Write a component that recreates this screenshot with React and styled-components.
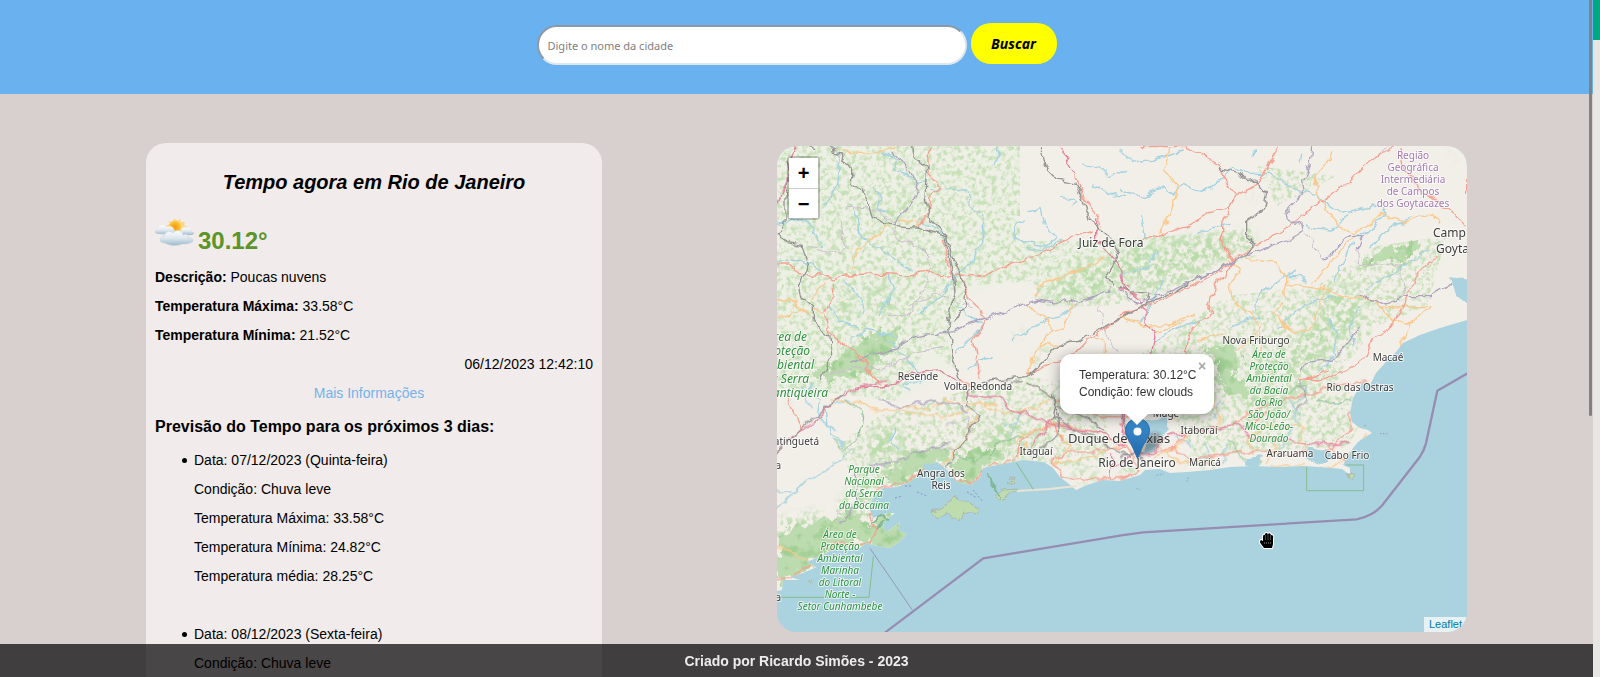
import React from "react";
import styled, { createGlobalStyle, css } from "styled-components";

const GlobalStyle = createGlobalStyle`
  * { box-sizing: border-box; }
  body {
    margin: 0;
    background: #d8cfcf;
    color: #000;
    font: 14px/29px "Liberation Sans", Arial, sans-serif;
  }
`;

/* ---------- page frame ---------- */

const Frame = styled.div`
  display: grid;
  grid-template-columns: minmax(0, 1fr) 7px;
  height: 100vh;
  overflow: hidden;
`;

const Page = styled.div`
  position: relative;
  height: 100vh;
  overflow: hidden;
`;

const Scroller = styled.div`
  height: 100%;
  overflow-y: auto;
  scrollbar-width: none;
`;

const ScrollThumb = styled.div`
  position: absolute;
  top: 0;
  right: 1px;
  width: 3px;
  height: 416px;
  border-radius: 0 0 2px 2px;
  background: #808182;
`;

const EdgeStrip = styled.div`
  background: #e7e6e3;
  border-top: 40px solid #00a884;
`;

const Header = styled.header`
  height: 94px;
  padding-top: 23px;
  background: #69b1ef;
`;

const SearchForm = styled.form`
  display: flex;
  justify-content: center;
  align-items: flex-end;
  gap: 4px;
`;

const SearchInput = styled.input`
  width: 430px;
  height: 40px;
  padding: 0 9px;
  border: 2px solid;
  border-color: #8d9aa5 #dfe6ec #dfe6ec #8d9aa5;
  border-radius: 20px;
  background: #fff;
  font: 11px "Noto Sans", sans-serif;
  &::placeholder { color: #808080; opacity: 1; }
`;

const SearchButton = styled.button`
  width: 86px;
  height: 41px;
  margin-bottom: 1px;
  padding: 0;
  border: 0;
  border-radius: 20px;
  background: #ff0;
  color: #000;
  font: italic bold 14px "Noto Sans", sans-serif;
`;

const Content = styled.main`
  display: grid;
  grid-template-columns: minmax(0, 456fr) minmax(0, 690fr);
  column-gap: 175px;
  align-items: start;
  padding: 49px 126px 52px 146px;
`;

const Footer = styled.footer`
  position: absolute;
  inset: auto 0 0 0;
  height: 33px;
  background: rgba(0, 0, 0, 0.7);
  color: #ececec;
  font-size: 14px;
  font-weight: bold;
  line-height: 35px;
  text-align: center;
`;

/* ---------- weather card ---------- */

const Card = styled.section`
  min-height: 900px;
  padding: 27px 9px;
  border-radius: 20px;
  background: #f1ebeb;
`;

const Title = styled.h1`
  margin: 0;
  font-size: 20px;
  font-style: italic;
  line-height: 24px;
  text-align: center;
`;

const Current = styled.div`
  display: flex;
  align-items: flex-end;
  gap: 3px;
  height: 49px;
  margin-top: 20px;
  padding-bottom: 8px;
`;

const Degrees = styled.strong`
  color: #5b9428;
  font-size: 24px;
  line-height: 28px;
`;

const Line = styled.p`
  margin: 0;
  text-align: ${(p) => p.$align || "left"};
`;

const MoreLink = styled.a`
  display: block;
  padding-right: 10px;
  color: #74b3ec;
  text-align: center;
  text-decoration: none;
`;

const Subtitle = styled.h2`
  margin: 0;
  font-size: 16px;
  line-height: 38px;
`;

const Days = styled.ul`
  margin: 0;
  padding-left: 39px;
  list-style: none;
`;

const Day = styled.li`
  position: relative;
  margin-bottom: 29px;
  &::before {
    content: "";
    position: absolute;
    top: 12px;
    left: -12px;
    width: 5px;
    height: 5px;
    border-radius: 50%;
    background: #000;
  }
`;

const days = [
  ["Data: 07/12/2023 (Quinta-feira)", "Condição: Chuva leve", "Temperatura Máxima: 33.58°C", "Temperatura Mínima: 24.82°C", "Temperatura média: 28.25°C"],
  ["Data: 08/12/2023 (Sexta-feira)", "Condição: Chuva leve"],
];

function FewClouds() {
  return (
    <svg width="40" height="36" viewBox="0 0 40 36" aria-hidden="true">
      <defs>
        <radialGradient id="sun">
          <stop offset="0" stopColor="#f39a16" />
          <stop offset="0.6" stopColor="#fbb62b" />
          <stop offset="1" stopColor="#fdd35c" />
        </radialGradient>
        <linearGradient id="cloud" x1="0" y1="0" x2="0" y2="1">
          <stop offset="0" stopColor="#fbfcfd" />
          <stop offset="0.5" stopColor="#dfe8ee" />
          <stop offset="1" stopColor="#9bbacd" />
        </linearGradient>
      </defs>
      <path d="M11 7l4-2-2-3 5 1 1-4 3 3 3-2 1 3 4 0-1 3 3 2-3 2 1 4H14z" fill="#fbd371" opacity=".8" />
      <circle cx="20" cy="8" r="6.500" fill="url(#sun)" />
      <path d="M4 15c-6 0-5-5-1-5 0-4 6-5 8-2 4-2 8 0 8 3 3 2 1 5-2 5z" fill="url(#cloud)" />
      <path d="M26 14c-1-4 2-7 6-5 3-1 5 2 4 3 4 0 4 4 0 4H24z" fill="url(#cloud)" />
      <path d="M10 24c-7 0-6-7-1-6 0-5 6-7 9-4 3-4 10-3 10 2 4-2 6 1 5 3 6-1 7 4 2 5-3 1-5 1-8 1-4 2-13 2-17-1z" fill="url(#cloud)" stroke="#bccfdb" strokeWidth=".4" />
    </svg>
  );
}

/* ---------- map ---------- */

const MapBox = styled.section`
  position: relative;
  height: 486px;
  margin-top: 3px;
  border-radius: 20px;
  overflow: hidden;
  background: #aad3df;
`;

const MapSvg = styled.svg`
  display: block;
  width: 100%;
  height: 100%;
`;

const strokes = {
  river: css`stroke: #a5d2e0; stroke-width: 4px;`,
  trunk: css`stroke: #f6a08f; stroke-width: 4px;`,
  road: css`stroke: #fac98c; stroke-width: 4px;`,
  motorway: css`stroke: #e3809f; stroke-width: 4px;`,
  rail: css`stroke: #949292; stroke-width: 4px;`,
  border: css`stroke: #ada2be; stroke-width: 4px;`,
  thin: css`stroke: #c9bfcb; stroke-width: 3px;`,
  park: css`stroke: #86bd8e; stroke-width: 3px;`,
};

const MapPath = styled.path`
  fill: none;
  stroke-linejoin: round;
  stroke-linecap: round;
  ${(p) => strokes[p.$kind]}
`;

const MapText = styled.text`
  font-family: "Noto Sans", sans-serif;
  font-size: ${(p) => ({ large: 12, city: 13 }[p.$size] || 10)}px;
  font-style: ${(p) => (p.$tone === "park" ? "italic" : "normal")};
  fill: ${(p) => ({ park: "#2f9140", region: "#a27bb0" }[p.$tone] || "#3b3b3b")};
  stroke: rgba(255, 255, 255, 0.7);
  stroke-width: 2px;
  stroke-linejoin: round;
  paint-order: stroke;
  text-anchor: ${(p) => p.$anchor || "middle"};
`;

// The map is traced in four sheets, each drawn at three units per pixel.
const sheets = {
  nw: "translate(-7 -6) scale(0.33333)",
  ne: "translate(343 -6) scale(0.33333)",
  sw: "translate(-7 234) scale(0.33333)",
  se: "translate(343 234) scale(0.33333)",
};

const sketchy = {
  nw: [
    ["river", "M340 40L380 60L370 90L410 100L440 130L470 125M190 20L210 60L200 130L170 190M310 140L330 180L320 210L350 215M20 250L90 240L120 250L125 280L160 320M240 200L265 230L270 290L310 320L350 340L380 370L430 390M480 150L510 145L590 150L600 190L635 230L640 290L610 360L570 395L540 430L510 470L450 520M450 240L500 270L520 290M680 20L690 45L670 70M940 65L960 85L990 80L1020 110L1070 85M780 215L810 205L825 260L860 290L830 320L740 300L735 260L760 240M880 170L920 185L900 200M970 130L1010 160L1070 170M220 420L270 470L280 520M350 400L370 450L330 530M560 500L600 530L640 560L560 640M730 600L780 570L830 540L870 530L920 490M20 370L70 360L120 370L160 400M450 730L440 690L400 640L350 600M600 690L640 660L670 650M240 600L290 570L380 590M760 320L820 330L880 300M180 500L210 540L260 560"],
    ["thin", "M220 210L280 205L330 215L370 250L370 290L440 320L470 350L480 400L450 470L420 520L350 530M980 480L1000 570L1050 640M120 320L200 345L225 320L210 240M420 500L500 460L600 500"],
    ["road", "M190 30L240 35L330 40L370 20M390 240L430 245L440 260M350 260L310 300L260 325L245 390M20 480L80 480L85 510L120 520M20 530L60 525L90 510M130 475L165 420M770 490L800 520L830 540L840 570L790 650L775 700M800 470L810 440L870 410L950 380L1000 350M910 490L880 560L840 570M860 620L830 610L810 620M980 590L1000 600L1000 640M160 520L130 510"],
    ["trunk", "M480 20L470 50L475 100L510 145L480 170L475 220L445 260M520 295L530 350L545 400M20 375L60 375L100 405L160 405L190 420L230 405L330 400L420 405L460 395L520 410L570 405L640 410L720 370L790 350L860 320L900 290L970 270M575 410L600 480L635 510L640 560L610 600L620 650L630 710M190 430L185 480L165 510L180 580L230 620L280 650L290 690L330 730M915 110L940 170L980 220L990 260M1080 515L1000 570L940 610L900 650L770 700M290 680L260 640"],
    ["motorway", "M80 20L60 60L50 130L20 190M865 20L890 50L900 80L915 105M980 240L980 300L1010 330L1045 370L1060 430L1080 445M260 745L360 735L430 700L510 695L560 720"],
    ["rail", "M120 20L140 25M185 20L190 40L215 45L245 90L245 135L280 150L310 230L380 260L450 265L525 290L535 340L550 400L555 460L530 530L540 570L545 640L570 720M425 20L430 50L470 80L465 170L480 240L530 290L545 350L570 400L590 460L585 500L550 540M50 60L60 100L45 160L45 250L25 280L45 310L100 320L115 370L85 440L95 480L130 500L130 550L180 590L185 640L150 720M810 20L825 80L860 115L915 130L940 180L960 240L990 270L1030 310L1045 350L1010 410L1030 440M1080 520L990 570L930 600L860 620L770 710L640 725"],
    ["border", "M360 40L400 65L430 110L445 150L420 200L380 240L370 250M370 630L440 590L500 580L560 575L600 550L660 530L740 500L800 480L870 490L900 475L930 490L1020 450M240 670L310 640L370 630"],
    ["thin", "M170 710L250 680L330 690L450 630L520 620"],
  ],
  ne: [
    ["river", "M0 30L40 70L100 60L190 30M0 150L60 170L130 140L160 160L190 130L250 160L310 110L340 80L380 100L450 100L520 150L590 160L630 200L680 220L760 195L800 210L740 280L700 290M560 260L630 270L680 230M410 510L415 460L480 420L530 390M700 310L670 370L640 420M740 450L800 410L860 370L930 330M480 560L530 510L580 480L640 470M750 330L790 280L870 230M100 600L180 560L240 540M65 230L75 290L60 310M540 70L545 40M400 30L400 45M230 280L330 250M0 410L90 380L110 330M560 430L540 410L500 410M630 540L650 580L640 650L600 690M720 500L690 560L700 620M330 560L420 530M130 420L90 500L60 550"],
    ["thin", "M555 275L605 355M710 320L720 370L850 375M760 60L800 20M840 380L850 460L820 490"],
    ["road", "M150 20L130 90L175 135L155 210L120 280M635 30L630 60L585 110L590 160L620 210L670 265L700 285L760 245L780 220L850 245L930 220L960 250M700 290L640 360L580 430M330 360L360 400L330 430L335 470L400 530L420 570L360 630M380 355L470 370L500 410L500 430L580 440L620 450L680 470L770 480L780 505L840 500L930 500L900 530L870 550L850 600L830 650M500 430L490 480L460 520L520 580L580 560L600 480L620 440M0 530L80 560L160 550L220 520M100 580L150 560L200 540M780 500L820 540L880 550M240 600L300 580L330 600M490 540L520 580M420 560L420 640"],
    ["trunk", "M60 20L200 20L240 40L300 85L345 165L330 200L305 250L305 310L340 360M475 25L430 100L400 140L345 170L330 200L260 220L210 255L130 285L60 300M820 20L730 75L670 140L600 185L530 240L440 300L400 320L340 360L330 390L290 430L265 490L275 520L220 560L200 600L200 640M950 350L900 390L870 440L855 480L820 560L760 600L740 650L680 690L600 720L530 715M840 30L850 80L900 150L960 190L1000 220L1035 260M1040 90L1040 160M0 525L50 510L130 480L330 375M560 720L620 690"],
    ["motorway", "M0 410L20 450L60 480L75 510L75 550L105 580L95 640M0 445L50 465"],
    ["rail", "M295 85L360 100L380 125L410 120L440 160L430 210L380 245L380 290L405 310L370 350L330 370L230 415L160 460L80 490L50 510L0 535M0 440L30 455L90 460L80 500"],
    ["border", "M575 20L570 80L545 120L550 160L500 210L505 240L545 250L550 275L500 300L370 350L310 380L220 420M605 355L630 350L650 320L680 290L730 290L710 320M0 450L50 490L140 460L220 420M720 470L760 480L800 495L850 470L930 470L980 435L1041 430M540 690L560 670L640 660L720 560"],
  ],
  sw: [
    ["river", "M20 390L60 350L110 300L180 260L250 210M370 140L370 190L380 210M90 20L150 60L140 110L200 150M700 140L740 130L750 100M240 60L170 80L180 160L220 200M460 0L400 10L420 30M740 130L720 170M20 330L60 340M130 10L100 60L130 80"],
    ["thin", "M530 140L590 110L600 160L560 210L480 200M210 430L200 400L250 370L300 370"],
    ["road", "M180 60L280 70L320 95L400 80L470 85L530 60L560 75L620 70L680 70M400 95L520 110L600 90M620 110L590 170L550 220L520 250M640 75L700 95L760 95L840 60M20 500L60 505L80 530L110 540M740 190L760 160L800 150L860 130M840 120L900 200L860 240M850 250L930 240L1000 215L1050 200M1000 200L1020 170L1075 190M740 230L770 190"],
    ["trunk", "M50 50L70 90L95 140M600 20L570 0M845 240L900 215L1000 210L1070 205M860 220L850 250L880 290L940 300L1030 295L1080 290M300 500L320 450L300 400L320 330L420 300L500 245L560 300L610 310L640 270L730 235L760 170L860 130M850 130L920 140L1000 160M20 600L90 580L140 540L200 490L300 490M850 130L880 180M860 60L1000 110L1080 110"],
    ["motorway", "M20 215L70 165L130 130L210 50L280 20L350 0M590 35L640 55L690 50L730 95L770 100L850 135L920 145L1000 160L1060 200M850 110L820 160L790 190L780 220M1060 90L1060 190M1020 290L1025 230M1030 260L1080 230"],
    ["rail", "M20 215L100 140L190 70L220 40M640 20L600 30L590 80L630 110L580 180L550 230L530 260M780 10L830 40L860 60L850 110L910 145L980 170L1010 200L1080 230M860 100L870 160L820 200L790 240M860 80L940 110L1000 150M850 40L860 90M700 10L760 5"],
    ["border", "M330 60L400 80L480 60L560 75L590 100M300 260L360 250L430 220L540 190M210 430L260 370L260 280"],
    ["park", "M230 60L280 100L270 170L220 210L190 180M560 230L620 240L650 210M760 170L680 190L660 240"],
  ],
  se: [
    ["river", "M250 190L270 230L240 240M520 150L480 200M560 30L520 80L530 130M170 170L220 200M300 60L280 110M540 110L510 60M320 190L310 250"],
    ["road", "M180 150L200 170L170 200L100 235M120 200L180 250L270 250M400 220L380 180L430 140L550 140L540 190L560 200M560 270L640 260L700 220L740 160M280 60L300 130L280 160M170 120L140 80M450 260L560 255M470 190L440 250"],
    ["trunk", "M0 300L60 270L40 230L0 180M110 220L160 200L210 240L330 220L410 210L500 225L610 215L640 200L690 150L690 90M0 130L40 200M150 210L200 160M380 150L440 95M340 130L370 110L400 90L520 50L680 10L740 0M620 200L680 250"],
    ["motorway", "M100 180L180 160L290 145L360 130L390 180L440 170L510 185L620 195L690 190M0 100L10 150L40 200M30 220L70 222L110 220L115 190"],
    ["rail", "M0 90L30 180L60 220M0 230L50 220L70 240"],
    ["border", "M540 0L560 60L530 90"],
    ["park", "M510 40L520 20L560 20L550 50M590 60L650 70L690 60M330 180L370 240L420 250"],
  ],
};

// "dense" woods are solid, "open" woods are broken up into patches
const forests = {
  nw: {
    dense: "M290 590L390 570L380 620L320 660L300 700L240 700L150 720L130 700L220 640Z",
    open: "M310 200L430 180L400 230L330 245ZM200 470L230 440L250 520L210 540ZM290 460L340 430L380 480L370 520L310 510ZM940 360L1080 370L1030 440L960 480L800 480L860 420ZM820 620L850 640L780 690ZM730 580L760 560L740 600ZM400 180L420 140L440 160Z",
  },
  ne: {
    dense: "M730 375L790 335L860 310L900 305L890 340L840 370L790 355L740 380ZM240 630L320 610L370 650L330 730L290 720L290 650Z",
    open: "M0 320L300 280L400 270L400 310L320 350L180 430L60 450L0 400ZM980 35L1010 40L1000 55ZM380 650L520 610L600 520L720 480L730 540L620 640L560 700L540 740L380 720ZM730 390L750 380L745 405ZM590 450L720 430L710 500L600 520ZM160 560L210 560L190 600ZM380 170L410 160L400 180Z",
  },
  sw: {
    dense: "M300 400L270 420L300 440L290 490L200 500L140 540L100 575L60 590L30 620L20 620L20 470L70 440L150 420L220 400ZM290 450L340 400L430 430L430 470L370 510L300 500ZM400 220L520 200L540 250L500 235L450 290L380 310L350 300ZM540 250L600 210L680 200L700 220L650 260L620 300L580 310Z",
    open: "M20 -10L80 10L70 60L20 40ZM290 240L280 190L320 150L390 150L400 200L350 240ZM240 330L300 260L420 220L380 310L310 340L300 400L220 420L200 380ZM640 200L650 160L700 110L770 120L740 180L760 230L680 250ZM900 270L970 270L990 290L930 310ZM750 200L790 150L830 170L780 220ZM20 420L150 390L150 440L20 480Z",
  },
  se: {
    dense: "M290 -10L380 0L390 60L350 50L300 10Z",
    open: "M400 -20L540 -10L540 40L460 100L390 120L360 70ZM610 -10L640 -10L635 5ZM0 260L40 255L50 280L0 300ZM200 240L260 220L300 260L230 265ZM640 120L670 115L660 150L630 150Z",
  },
};

const labels = [
  { x: 334, y: 101, size: "large", lines: ["Juiz de Fora"] },
  { x: 141, y: 234, lines: ["Resende"] },
  { x: 201, y: 244, lines: ["Volta Redonda"] },
  { x: 479, y: 198, lines: ["Nova Friburgo"] },
  { x: 611, y: 215, lines: ["Macaé"] },
  { x: 583, y: 245, lines: ["Rio das Ostras"] },
  { x: 636, y: 13, tone: "region", lines: ["Região", "Geográfica", "Intermediária", "de Campos", "dos Goytacazes"] },
  { x: 656, y: 91, size: "large", anchor: "start", lines: ["Camp"] },
  { x: 659, y: 107, size: "large", anchor: "start", lines: ["Goyta"] },
  { x: 30, y: 195, size: "large", anchor: "end", tone: "park", lines: ["Área de"] },
  { x: 33, y: 209, size: "large", anchor: "end", tone: "park", lines: ["Proteção"] },
  { x: 37, y: 223, size: "large", anchor: "end", tone: "park", lines: ["Ambiental"] },
  { x: 32, y: 237, size: "large", anchor: "end", tone: "park", lines: ["da Serra"] },
  { x: 51, y: 251, size: "large", anchor: "end", tone: "park", lines: ["Mantiqueira"] },
  { x: 42, y: 299, anchor: "end", lines: ["Guaratinguetá"] },
  { x: 4, y: 323, anchor: "end", lines: ["a"] },
  { x: 4, y: 455, anchor: "end", lines: ["a"] },
  { x: 87, y: 327, tone: "park", lines: ["Parque", "Nacional", "da Serra", "da Bocaina"] },
  { x: 63, y: 392, tone: "park", lines: ["Área de", "Proteção", "Ambiental", "Marinha", "do Litoral", "Norte -", "Setor Cunhambebe"] },
  { x: 164, y: 331, lines: ["Angra dos", "Reis"] },
  { x: 259, y: 309, lines: ["Itaguaí"] },
  { x: 342, y: 297, size: "city", lines: ["Duque de Caxias"] },
  { x: 360, y: 321, size: "large", lines: ["Rio de Janeiro"] },
  { x: 389, y: 271, lines: ["Magé"] },
  { x: 422, y: 288, lines: ["Itaboraí"] },
  { x: 428, y: 320, lines: ["Maricá"] },
  { x: 513, y: 311, lines: ["Araruama"] },
  { x: 570, y: 313, lines: ["Cabo Frio"] },
  { x: 492, y: 212, tone: "park", lines: ["Área de", "Proteção", "Ambiental", "da Bacia", "do Rio", "São João/", "Mico-Leão-", "Dourado"] },
];

function MapDrawing() {
  return (
    <MapSvg viewBox="0 0 690 486" preserveAspectRatio="xMidYMid slice" role="img" aria-label="Mapa">
      <defs>
        <filter id="wiggle" filterUnits="userSpaceOnUse" x="0" y="0" width="690" height="486">
          <feTurbulence type="fractalNoise" baseFrequency="0.09" numOctaves="2" seed="4" />
          <feDisplacementMap in="SourceGraphic" scale="9" xChannelSelector="R" yChannelSelector="G" />
        </filter>
        <filter id="speckle" filterUnits="userSpaceOnUse" x="0" y="0" width="690" height="486" colorInterpolationFilters="sRGB">
          <feTurbulence type="fractalNoise" baseFrequency="0.2" numOctaves="4" seed="9" />
          <feColorMatrix values="0 0 0 0 0.78  0 0 0 0 0.88  0 0 0 0 0.72  4 0 0 0 -1.8" result="dots" />
          <feComposite in="dots" in2="SourceGraphic" operator="in" />
        </filter>
        <filter id="openWood" filterUnits="userSpaceOnUse" x="0" y="0" width="690" height="486" colorInterpolationFilters="sRGB">
          <feGaussianBlur in="SourceGraphic" stdDeviation="5" result="area" />
          <feTurbulence type="fractalNoise" baseFrequency="0.14" numOctaves="4" seed="12" />
          <feColorMatrix values="0 0 0 0 0.73  0 0 0 0 0.86  0 0 0 0 0.67  6 0 0 0 -2.8" result="patches" />
          <feComposite in="patches" in2="area" operator="in" />
        </filter>
        <filter id="denseWood" filterUnits="userSpaceOnUse" x="0" y="0" width="690" height="486" colorInterpolationFilters="sRGB">
          <feTurbulence type="fractalNoise" baseFrequency="0.12" numOctaves="4" seed="2" />
          <feDisplacementMap in="SourceGraphic" scale="22" xChannelSelector="R" yChannelSelector="G" result="rough" />
          <feTurbulence type="fractalNoise" baseFrequency="0.08" numOctaves="4" seed="12" />
          <feColorMatrix values="0 0 0 0 0.63  0 0 0 0 0.81  0 0 0 0 0.58  5 0 0 0 -2.6" result="dark" />
          <feComposite in="dark" in2="rough" operator="in" result="shade" />
          <feMerge>
            <feMergeNode in="rough" />
            <feMergeNode in="shade" />
          </feMerge>
        </filter>
        <clipPath id="land">
          <path d="M0 0H690V174L663 182L643 189L626 197L619 206L609 216L599 227L593 239L585 237L576 252L573 267L575 276L583 282L591 284L595 287L588 291L581 296L576 302L570 312L566 319L573 322L573 329L565 323L543 321L526 320L503 321L476 320L453 321L433 324L410 326L393 327L383 323L368 324L363 329L353 332L343 335L326 334L310 339L299 344L292 338L283 331L276 322L267 316L246 314L226 318L215 320L206 322L203 332L193 339L180 336L170 324L160 316L150 319L143 329L133 336L120 341L106 342L96 351L93 364L96 372L110 367L118 367L106 377L108 387L123 376L121 384L130 388L121 397L113 402L96 399L90 397L83 402L60 401L46 409L30 416L40 421L26 427L13 431L23 434L6 434L5 444L0 445Z" />
        </clipPath>
      </defs>

      <rect width="690" height="486" fill="#aad3df" />
      <g clipPath="url(#land)">
        <rect width="690" height="486" fill="#f2efe9" />
        <path d="M0 0H243V95L320 95L420 90L330 150L270 160L255 130L190 150L170 230L120 255L0 240Z" fill="#e9f1e0" opacity=".45" />
        <path filter="url(#speckle)" d="M0 0H243V95L300 95L420 88L475 82L480 110L430 125L380 150L330 160L265 160L255 135L190 140L170 190L180 225L150 200L120 255L0 240ZM400 185L450 150L540 140L600 100L670 90L650 160L600 180L560 230L590 270L570 300L420 310L390 260L330 230ZM100 270L240 230L330 240L330 320L200 330L80 340L60 300ZM480 20L560 30L500 60Z" />
        <g filter="url(#openWood)">
          {Object.keys(sheets).map((key) => (
            <path key={key} transform={sheets[key]} d={forests[key].open} />
          ))}
        </g>
        <g filter="url(#denseWood)">
          {Object.keys(sheets).map((key) => (
            <path key={key} transform={sheets[key]} d={forests[key].dense} fill="#bcdbae" />
          ))}
        </g>
        <g filter="url(#wiggle)">
          {Object.keys(sheets).map((key) => (
            <g key={key} transform={sheets[key]}>
              {sketchy[key].map(([kind, d]) => <MapPath key={d} $kind={kind} d={d} />)}
            </g>
          ))}
        </g>
      </g>

      {/* bays, lagoons and islands */}
      <g fill="#aad3df" filter="url(#wiggle)">
        <path d="M366 274L390 272L394 284L381 292L379 305L366 309L369 292Z" />
        <path d="M672 131L695 134V162L680 150Z" />
        <path d="M530 302L550 305L558 312L545 318L530 312ZM470 312L485 310L480 320H470Z" />
        <path d="M146 318L160 317L163 328L150 330Z" />
      </g>
      <g filter="url(#wiggle)" fill="#bfdcae" stroke="#a6a09a" strokeWidth=".6">
        <path d="M154 366L168 361L177 351L186 354L192 358L204 362L200 369L186 367L182 376L172 367L160 374Z" />
        <path d="M218 350L226 344L240 343L232 350L222 353ZM229 336L236 331L234 336Z" />
        <path d="M572 327L577 329L574 334L571 332Z" />
        <path d="M30 436L36 434L34 438Z" />
      </g>
      <path d="M240 345L272 343L300 340" fill="none" stroke="#e9e4d4" strokeWidth="2" />
      <path d="M96 376L104 370L112 372M100 384L108 374M212 326L214 340L224 350" fill="none" stroke="#7fb893" strokeWidth="2" filter="url(#wiggle)" />

      {/* protected sea areas and maritime limits */}
      <g transform={sheets.sw}>
        <MapPath $kind="park" d="M310 530L297 652H20M740 250L790 328" />
        <path d="M300 505L427 690" fill="none" stroke="#9c97b4" strokeWidth="3" />
        <path d="M345 758L640 535L1050 467" fill="none" stroke="#978db2" strokeWidth="7" />
      </g>
      <g transform={sheets.se}>
        <MapPath $kind="park" d="M560 262V332H731V255H680" />
        <path d="M-2 467L70 457L710 418C740 412 765 400 785 378L900 230Q912 212 918 190L952 32L1050 -24" fill="none" stroke="#978db2" strokeWidth="7" strokeLinejoin="round" />
        <path d="M50 325L60 330M110 285L130 282M200 305L206 292M735 135L736 142M780 160L805 162" stroke="#8f9bb5" strokeWidth="3" strokeDasharray="4 5" />
      </g>
      <path d="M128 340H136M140 346L150 350M190 346L200 352M196 344L206 356M118 352L126 350" stroke="#8c90c8" strokeDasharray="2 2" />

      {labels.map((l) => (
        <g key={l.lines.join() + l.y}>
          {l.lines.map((t, i) => (
            <MapText key={t} x={l.x} y={l.y + i * 12} $size={l.size} $tone={l.tone} $anchor={l.anchor}>
              {t}
            </MapText>
          ))}
        </g>
      ))}

      {/* grabbing-hand pointer */}
      <g transform="translate(482 387)">
        <path d="M5 15L2 11Q0 8 2 7L4 8V4Q4 1 6 2V1Q7-1 9 1Q11-1 12 2Q15 2 14 5V11L13 15Z" fill="#000" stroke="#fff" strokeWidth="2" strokeLinejoin="round" paintOrder="stroke" />
        <path d="M6.500 2V7M9 1V7M11.500 2V7" stroke="#777" strokeWidth=".6" />
        <path d="M5 10H13" stroke="#999" strokeDasharray="1 1" />
      </g>
    </MapSvg>
  );
}

const ZoomControls = styled.div`
  position: absolute;
  top: 10px;
  left: 10px;
  border: 2px solid rgba(0, 0, 0, 0.2);
  border-radius: 4px;
`;

const ZoomButton = styled.button`
  display: block;
  width: 29px;
  height: 30px;
  padding: 0;
  border: 0;
  background: #fff;
  color: #000;
  font: bold 20px/30px "Liberation Sans", Arial, sans-serif;
  & + & { border-top: 1px solid #ccc; }
`;

const MarkerPin = styled.svg`
  position: absolute;
  top: 272px;
  left: calc(50% + 3px);
`;

const Popup = styled.div`
  position: absolute;
  top: 208px;
  left: calc(50% - 62px);
  width: 154px;
  height: 60px;
  padding: 13px 19px;
  border-radius: 12px;
  background: #fff;
  box-shadow: 0 3px 14px rgba(0, 0, 0, 0.4);
  color: #333;
  font-size: 12px;
  line-height: 17px;
  white-space: nowrap;
  &::after {
    content: "";
    position: absolute;
    top: 100%;
    left: 50%;
    margin-left: -11px;
    border: 11px solid transparent;
    border-top-color: #fff;
    border-bottom-width: 0;
  }
`;

const CloseButton = styled.button`
  position: absolute;
  top: 0;
  right: 0;
  width: 24px;
  height: 24px;
  padding: 0;
  border: 0;
  background: transparent;
  color: #a5a5a5;
  font: bold 14px/24px "Liberation Sans", Arial, sans-serif;
`;

const Attribution = styled.div`
  position: absolute;
  right: 0;
  bottom: 0;
  padding: 0 5px;
  background: rgba(255, 255, 255, 0.7);
  font-size: 11px;
  line-height: 15px;
  a { color: #0078a8; text-decoration: none; }
`;

function Marker() {
  return (
    <MarkerPin width="42" height="42" viewBox="0 0 42 42" aria-hidden="true">
      <defs>
        <linearGradient id="pin" x1="0" y1="0" x2="0" y2="1">
          <stop offset="0" stopColor="#3b8fd0" />
          <stop offset="1" stopColor="#2468a8" />
        </linearGradient>
        <filter id="pinShadow"><feGaussianBlur stdDeviation="2" /></filter>
      </defs>
      <path d="M13 40L20 20Q30 10 36 18Q38 26 28 32Z" fill="#000" opacity=".3" filter="url(#pinShadow)" />
      <path d="M12.500 .5C5.800.5.500 5.800.500 12.500c0 6 4 10 7 16.500l5 11.500 5-11.500c3-6.500 7-10.500 7-16.500C24.500 5.800 19.200.5 12.500.5z" fill="url(#pin)" stroke="#2b6fae" />
      <circle cx="12.500" cy="13.500" r="4" fill="#fff" />
    </MarkerPin>
  );
}

export default function App() {
  return (
    <Frame>
      <GlobalStyle />
      <Page>
        <Scroller>
          <Header>
            <SearchForm onSubmit={(e) => e.preventDefault()}>
              <SearchInput type="text" placeholder="Digite o nome da cidade" aria-label="Digite o nome da cidade" />
              <SearchButton type="submit">Buscar</SearchButton>
            </SearchForm>
          </Header>
          <Content>
            <Card>
              <Title>Tempo agora em Rio de Janeiro</Title>
              <Current>
                <FewClouds />
                <Degrees>30.12°</Degrees>
              </Current>
              <Line><strong>Descrição:</strong> Poucas nuvens</Line>
              <Line><strong>Temperatura Máxima:</strong> 33.58°C</Line>
              <Line><strong>Temperatura Mínima:</strong> 21.52°C</Line>
              <Line $align="right">06/12/2023 12:42:10</Line>
              <MoreLink href="#previsao">Mais Informações</MoreLink>
              <Subtitle id="previsao">Previsão do Tempo para os próximos 3 dias:</Subtitle>
              <Days>
                {days.map((lines) => (
                  <Day key={lines[0]}>
                    {lines.map((text) => <Line key={text}>{text}</Line>)}
                  </Day>
                ))}
              </Days>
            </Card>
            <MapBox>
              <MapDrawing />
              <Marker />
              <ZoomControls>
                <ZoomButton type="button" aria-label="Aproximar">+</ZoomButton>
                <ZoomButton type="button" aria-label="Afastar">−</ZoomButton>
              </ZoomControls>
              <Popup>
                Temperatura: 30.12°C
                <br />
                Condição: few clouds
                <CloseButton type="button" aria-label="Fechar">×</CloseButton>
              </Popup>
              <Attribution><a href="#leaflet">Leaflet</a></Attribution>
            </MapBox>
          </Content>
        </Scroller>
        <Footer>Criado por Ricardo Simões - 2023</Footer>
        <ScrollThumb />
      </Page>
      <EdgeStrip />
    </Frame>
  );
}
